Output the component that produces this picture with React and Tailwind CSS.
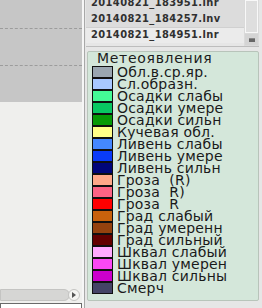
import React from "react";

const items = [
  ["#9aa6b0", "Обл.в.ср.яр."],
  ["#a8c8ff", "Сл.образн."],
  ["#44fa96", "Осадки слабы"],
  ["#08c862", "Осадки умере"],
  ["#069a06", "Осадки сильн"],
  ["#ffff88", "Кучевая обл."],
  ["#4488ff", "Ливень слабы"],
  ["#0a3cf8", "Ливень умере"],
  ["#00067a", "Ливень сильн"],
  ["#ffa888", "Гроза  (R)"],
  ["#fc6484", "Гроза  R)"],
  ["#ff0000", "Гроза  R"],
  ["#c8620c", "Град слабый"],
  ["#94420e", "Град умеренн"],
  ["#620000", "Град сильный"],
  ["#ffaaff", "Шквал слабый"],
  ["#fa48f4", "Шквал умерен"],
  ["#cc00cc", "Шквал сильны"],
  ["#444466", "Смерч"],
];

const files = ["20140821_183951.lnr", "20140821_184257.lnv", "20140821_184951.lnr"];

export default function App() {
  return (
    <div className="w-[262px] h-[308px] overflow-hidden flex bg-[#e6e6e6] font-['DejaVu_Sans',sans-serif]">
      {/* left pane */}
      <div className="w-[82px] h-full flex flex-col shrink-0">
        <div className="h-[102px] bg-[#c6c6c6] relative">
          <div className="absolute left-0 right-0 top-[28px] border-t border-dashed border-[#9c9c9c]" />
          <div className="absolute left-0 right-0 top-[65px] border-t border-dashed border-[#9c9c9c]" />
        </div>
        <div className="flex-1 bg-[#efefed]" />
        <div className="h-[14px] bg-[#efefed] flex items-center pr-[2px]">
          <div className="flex-1 h-[12px] rounded-r-full bg-[#d6d6d4] border border-[#c4c4c2]" />
          <div className="w-[12px] h-[12px] rounded-full bg-[#f4f4f2] border border-[#c4c4c2] flex items-center justify-center -ml-[2px]">
            <div className="w-0 h-0 border-y-[3px] border-y-transparent border-l-[4px] border-l-[#555]" />
          </div>
        </div>
        <div className="h-[6px] bg-[#efefed] pt-[1px]">
          <div className="h-full border-t border-x border-[#6a6a6a] bg-white" />
        </div>
      </div>
      {/* splitter */}
      <div className="w-[2px] h-full bg-[#f6f6f6] shrink-0" />
      <div className="w-px h-full bg-[#a8a8a8] shrink-0" />
      {/* right pane */}
      <div className="flex-1 h-full flex flex-col pl-[1px] pr-[3px]">
        <div className="h-[47px] flex border-b border-[#bdbdbd] shrink-0">
          <div className="flex-1 flex flex-col overflow-hidden">
            <div className="-mt-[5px]">
              {files.map((f, i) => (
                <div
                  key={f}
                  className={
                    "h-[16px] pl-[5px] flex items-center text-[11px] font-bold text-[#303030] font-['DejaVu_Sans_Condensed','DejaVu_Sans',sans-serif] tracking-[0.4px] whitespace-nowrap " +
                    (i === 2 ? "bg-[#ebebeb] border-t border-[#d0d0d0]" : "bg-[#dcdcdc]")
                  }
                >
                  {f}
                </div>
              ))}
            </div>
          </div>
          <div className="w-[15px] flex flex-col bg-[#dadada] px-[1px]">
            <div className="h-[33px] border border-[#f8f8f8] bg-[#dedede]" />
            <div className="h-[11px] mt-[1px] flex items-center justify-center bg-[#d4d4d4]">
              <div className="w-[6px] h-[4px] bg-[#666] border-t border-[#888]" />
            </div>
          </div>
        </div>
        <div className="mt-[4px] h-[250px] ml-[1px] border border-[#b8c4ba] bg-[#d4e7da] rounded-[2px] flex flex-col">
          <div className="h-[14px] pl-[9px] -mt-[1px] text-[14px] leading-[14px] tracking-[0.7px] text-[#1c1c1c] whitespace-nowrap">Метеоявления</div>
          <div className="pl-[4px] mt-[1px] flex flex-col">
            {items.map(([c, t]) => (
              <div key={t} className="h-[12px] flex items-center">
                <div className="w-[21px] h-[12px] border border-[#101010] shrink-0" style={{ backgroundColor: c }} />
                <div className="ml-[4px] text-[14px] leading-[12px] tracking-[0.2px] text-[#1a1a1a] whitespace-pre">{t}</div>
              </div>
            ))}
          </div>
        </div>
      </div>
    </div>
  );
}
